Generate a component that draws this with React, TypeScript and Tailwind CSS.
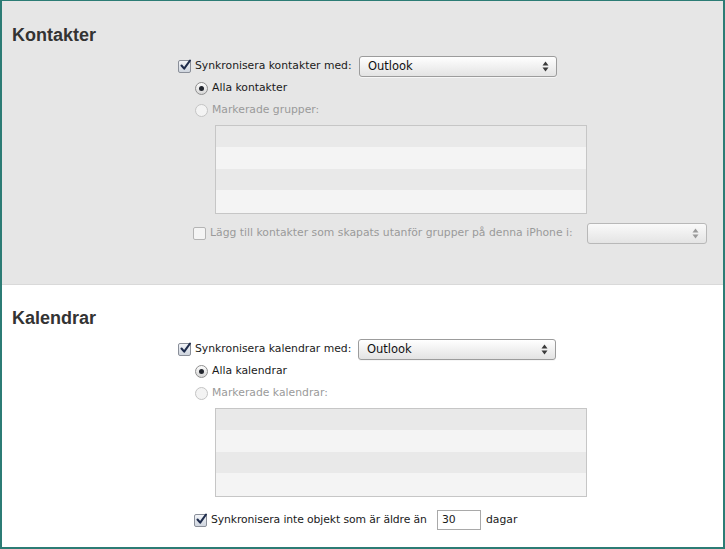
import React from "react";

const ui = "font-['DejaVu_Sans',sans-serif] text-[10.8px]";

function CheckBox({ checked, disabled }: { checked?: boolean; disabled?: boolean }) {
    return (
        <div
            className={`relative h-[13px] w-[13px] shrink-0 rounded-[2px] border ${
                disabled ? "border-[#b4b4b4] bg-[#f4f4f4]" : "border-[#8a8f99] bg-gradient-to-b from-[#f2f4f8] to-[#cfd5de]"
            }`}
        >
            {checked && (
                <svg className="absolute -top-[2px] left-[0px]" width="13" height="13" viewBox="0 0 13 13">
                    <path d="M2.5 6.5 L5.2 9.6 L11 1.5" fill="none" stroke="#1e2c4c" strokeWidth="2.1" strokeLinecap="round" strokeLinejoin="round" />
                </svg>
            )}
        </div>
    );
}

function Radio({ checked, disabled }: { checked?: boolean; disabled?: boolean }) {
    return (
        <div
            className={`flex h-[13px] w-[13px] shrink-0 items-center justify-center rounded-full border ${
                disabled ? "border-[#c4c4c4] bg-[#f3f3f3]" : "border-[#8f8f8f] bg-gradient-to-b from-[#fdfdfd] to-[#d6d6d6]"
            }`}
        >
            {checked && <div className="h-[5px] w-[5px] rounded-full bg-[#22262e]" />}
        </div>
    );
}

function Arrows({ light }: { light?: boolean }) {
    const c = light ? "#9a9a9a" : "#3a3a3a";
    return (
        <svg width="7" height="11" viewBox="0 0 7 11">
            <path d="M3.5 0.5 L6.5 4.5 L0.5 4.5 Z" fill={c} />
            <path d="M3.5 10.5 L6.5 6.5 L0.5 6.5 Z" fill={c} />
        </svg>
    );
}

function Select({ value, width, disabled }: { value?: string; width: string; disabled?: boolean }) {
    return (
        <div
            className={`flex h-[21px] items-center justify-between rounded-[3px] border pl-[8px] pr-[7px] ${width} ${
                disabled
                    ? "border-[#b8b8b8] bg-gradient-to-b from-[#fafafa] to-[#e4e4e4]"
                    : "border-[#9c9c9c] bg-gradient-to-b from-[#ffffff] to-[#e3e3e3] shadow-[0_1px_0_#f6f6f6]"
            }`}
        >
            <span className="text-[11.5px] text-[#111]">{value}</span>
            <Arrows light={disabled} />
        </div>
    );
}

function ListBox() {
    return (
        <div className="ml-[213px] flex h-[89px] w-[372px] flex-col border border-[#c6c6c6]">
            <div className="h-[21px] bg-[#e9e9e9]" />
            <div className="h-[22px] bg-[#f4f4f4]" />
            <div className="h-[21px] bg-[#e9e9e9]" />
            <div className="flex-1 bg-[#f4f4f4]" />
        </div>
    );
}

function Section({
    title,
    label,
    labelWidth,
    allLabel,
    markedLabel,
    gray,
    children,
}: {
    title: string;
    label: string;
    labelWidth: string;
    allLabel: string;
    markedLabel: string;
    gray?: boolean;
    children: React.ReactNode;
}) {
    return (
        <div className={gray ? "h-[284px] border-b border-[#d9d9d9] bg-[#e6e6e6] pt-[23px]" : "flex-1 bg-white pt-[22px]"}>
            <div className="h-[22px] pl-[10px] font-['Liberation_Sans',Arial,sans-serif] text-[18px] font-bold leading-[22px] text-[#333]">
                {title}
            </div>
            <div className="mt-[10px] flex h-[21px] items-center pl-[176px] text-[#1a1a1a]">
                <CheckBox checked />
                <span className={`ml-[4px] ${labelWidth}`}>{label}</span>
                <Select value="Outlook" width="w-[198px]" />
            </div>
            <div className="flex h-[22px] items-center pl-[193px] text-[#1a1a1a]">
                <Radio checked />
                <span className="ml-[4px]">{allLabel}</span>
            </div>
            <div className="flex h-[22px] items-center pl-[193px] text-[#9a9a9a]">
                <Radio disabled />
                <span className="ml-[4px]">{markedLabel}</span>
            </div>
            <div className="mt-[4px]">
                <ListBox />
            </div>
            {children}
        </div>
    );
}

export default function App() {
    return (
        <div className={`flex h-[549px] w-[725px] flex-col overflow-hidden border-b-2 border-l-2 border-r-2 border-t border-[#2c7c75] ${ui}`}>
            <Section
                gray
                title="Kontakter"
                label="Synkronisera kontakter med:"
                labelWidth="w-[164px]"
                allLabel="Alla kontakter"
                markedLabel="Markerade grupper:"
            >
                <div className="mt-[8px] flex h-[22px] items-center pl-[191px] text-[#9a9a9a]">
                    <CheckBox disabled />
                    <span className="ml-[4px] w-[377px]">Lägg till kontakter som skapats utanför grupper på denna iPhone i:</span>
                    <Select width="w-[120px]" disabled />
                </div>
            </Section>
            <Section
                title="Kalendrar"
                label="Synkronisera kalendrar med:"
                labelWidth="w-[163px]"
                allLabel="Alla kalendrar"
                markedLabel="Markerade kalendrar:"
            >
                <div className="mt-[12px] flex h-[22px] items-center pl-[192px] text-[#1a1a1a]">
                    <CheckBox checked />
                    <span className="ml-[4px] w-[226px] whitespace-nowrap tracking-[-0.1px]">Synkronisera inte objekt som är äldre än</span>
                    <div className="flex h-[20px] w-[44px] items-center border border-[#a9a9a9] bg-white pl-[4px]">30</div>
                    <span className="ml-[5px]">dagar</span>
                </div>
            </Section>
        </div>
    );
}
